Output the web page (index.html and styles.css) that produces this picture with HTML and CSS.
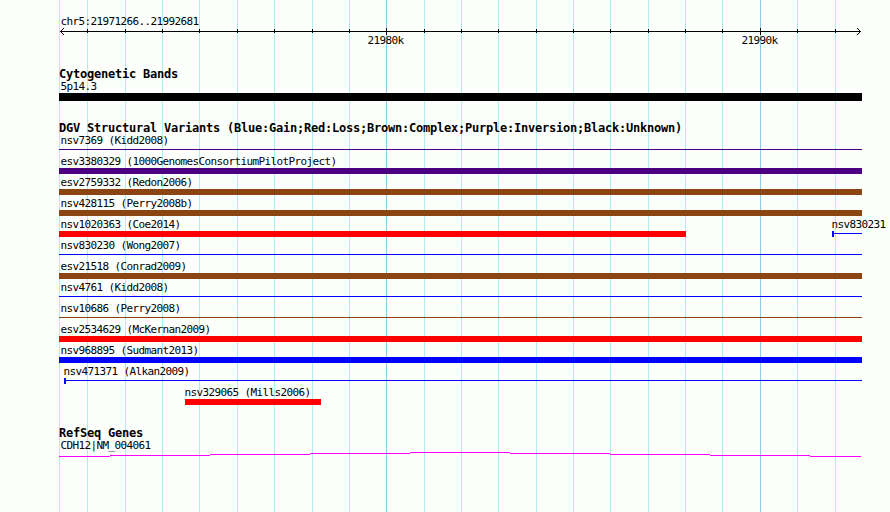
FILE: index.html
```html
<!DOCTYPE html>
<html lang="en">
<head>
    <meta charset="UTF-8">
    <title>chr5:21971266..21992681</title>
    <link rel="stylesheet" href="styles.css">
</head>
<body>
    <div class="browser">
        <!-- Vertical guide lines behind the tracks -->
        <svg class="guides" width="890" height="512" viewBox="0 0 890 512">
            <path class="minor" d="M59.5 0v512M87.5 0v512M125.5 0v512M162.5 0v512M199.5 0v512M237.5 0v512M274.5 0v512M312.5 0v512M349.5 0v512M424.5 0v512M461.5 0v512M498.5 0v512M536.5 0v512M573.5 0v512M610.5 0v512M648.5 0v512M685.5 0v512M722.5 0v512M797.5 0v512M835.5 0v512"/>
            <path class="major" d="M386.5 0v512M760.5 0v512"/>
        </svg>

        <main class="tracks">
            <section class="ruler">
                <div class="label">chr5:21971266..21992681</div>
                <svg class="axis" width="803" height="7" viewBox="59 28 803 7">
                    <path d="M60 31.5h801"/>
                    <path d="M87.5 29v4M125.5 29v4M162.5 29v4M199.5 29v4M237.5 29v4M274.5 29v4M312.5 29v4M349.5 29v4M424.5 29v4M461.5 29v4M498.5 29v4M536.5 29v4M573.5 29v4M610.5 29v4M648.5 29v4M685.5 29v4M722.5 29v4M797.5 29v4M835.5 29v4"/>
                    <path d="M386.5 28v7M760.5 28v7"/>
                    <path d="M61 30.5h1M62 29.5h1M63 28.5h1M61 32.5h1M62 33.5h1M63 34.5h1"/>
                    <path d="M859 30.5h1M858 29.5h1M857 28.5h1M859 32.5h1M858 33.5h1M857 34.5h1"/>
                </svg>
                <div class="ticks">
                    <span class="tick">21980k</span>
                    <span class="tick">21990k</span>
                </div>
            </section>

            <section class="track cytoband">
                <h2>Cytogenetic Bands</h2>
                <div class="label">5p14.3</div>
                <div class="band"></div>
            </section>

            <section class="track variants">
                <h2>DGV Structural Variants (Blue:Gain;Red:Loss;Brown:Complex;Purple:Inversion;Black:Unknown)</h2>
                <div class="row">
                    <div class="feature full inversion"><div class="label">nsv7369 (Kidd2008)</div><div class="glyph thin"></div></div>
                </div>
                <div class="row">
                    <div class="feature full inversion"><div class="label">esv3380329 (1000GenomesConsortiumPilotProject)</div><div class="glyph"></div></div>
                </div>
                <div class="row">
                    <div class="feature full complex"><div class="label">esv2759332 (Redon2006)</div><div class="glyph"></div></div>
                </div>
                <div class="row">
                    <div class="feature full complex"><div class="label">nsv428115 (Perry2008b)</div><div class="glyph"></div></div>
                </div>
                <div class="row split">
                    <div class="feature coe loss"><div class="label">nsv1020363 (Coe2014)</div><div class="glyph"></div></div>
                    <div class="feature wong gain"><div class="label">nsv830231</div><div class="glyph thin capped"></div></div>
                </div>
                <div class="row">
                    <div class="feature full gain"><div class="label">nsv830230 (Wong2007)</div><div class="glyph thin"></div></div>
                </div>
                <div class="row">
                    <div class="feature full complex"><div class="label">esv21518 (Conrad2009)</div><div class="glyph"></div></div>
                </div>
                <div class="row">
                    <div class="feature full gain"><div class="label">nsv4761 (Kidd2008)</div><div class="glyph thin"></div></div>
                </div>
                <div class="row">
                    <div class="feature full complex"><div class="label">nsv10686 (Perry2008)</div><div class="glyph thin"></div></div>
                </div>
                <div class="row">
                    <div class="feature full loss"><div class="label">esv2534629 (McKernan2009)</div><div class="glyph"></div></div>
                </div>
                <div class="row">
                    <div class="feature full gain"><div class="label">nsv968895 (Sudmant2013)</div><div class="glyph"></div></div>
                </div>
                <div class="row">
                    <div class="feature alkan gain"><div class="label">nsv471371 (Alkan2009)</div><div class="glyph thin capped"></div></div>
                </div>
                <div class="row">
                    <div class="feature mills loss"><div class="label">nsv329065 (Mills2006)</div><div class="glyph"></div></div>
                </div>
            </section>

            <section class="track genes">
                <h2>RefSeq Genes</h2>
                <div class="label">CDH12|NM_004061</div>
                <svg class="intron" width="803" height="5" viewBox="59 452 803 5">
                    <path d="M59 456.5h51M110 455.5h100M210 454.5h100M310 453.5h100M410 452.5h100M510 453.5h100M610 454.5h100M710 455.5h100M810 456.5h51"/>
                </svg>
            </section>
        </main>
    </div>
</body>
</html>
```

FILE: styles.css
```css
* {
    margin: 0;
    padding: 0;
    box-sizing: border-box;
}

body {
    background: #fdfffc;
    color: #000;
    font: 11px "DejaVu Sans Mono", monospace;
    overflow: hidden;
}

.browser {
    position: relative;
    width: 890px;
    height: 512px;
}

svg {
    display: block;
    fill: none;
    shape-rendering: crispEdges;
}

.guides {
    position: absolute;
    top: 0;
    left: 0;
}

.minor { stroke: #afeeee; }
.major { stroke: #87ceeb; }

.tracks {
    position: relative;
    width: 862px;
    padding: 13px 0 0 59px;
}

/* 6px wide characters */
.label,
.tick {
    height: 15px;
    line-height: 17px;
    letter-spacing: -0.622px;
    white-space: pre;
}

.label {
    padding-left: 1.4px;
}

/* 7px wide characters */
h2 {
    height: 11px;
    font-size: 12px;
    font-weight: bold;
    line-height: 14px;
    letter-spacing: -0.224px;
    white-space: pre;
}

.axis { stroke: #000; }

.ticks {
    display: flex;
    gap: 338px;
    margin-top: -3px;
    padding-left: 308.4px;
}

.tick {
    width: 36px;
}

.track {
    margin-top: 20px;
}

.band {
    height: 8px;
    background: #000;
}

.row {
    display: flex;
    height: 21px;
}

.split {
    justify-content: space-between;
}

.full { width: 803px; }
.coe { width: 627px; }
.wong { width: 30px; }
.alkan { width: 798px; margin-left: 5px; }
.mills { width: 136px; margin-left: 126px; }

.wong .label,
.alkan .label,
.mills .label {
    padding-left: 0;
    margin-left: -0.6px;
}

.inversion { color: #4b0082; }
.complex { color: #8b4513; }
.loss { color: #f00; }
.gain { color: #00f; }

.feature .label {
    color: #000;
}

.glyph {
    height: 6px;
    background: currentColor;
}

.thin {
    background: linear-gradient(currentColor, currentColor) 0 2px / 100% 1px no-repeat;
}

.capped {
    border-left: 2px solid currentColor;
}

.genes {
    margin-top: 21px;
}

.intron { stroke: #f0f; }
```
